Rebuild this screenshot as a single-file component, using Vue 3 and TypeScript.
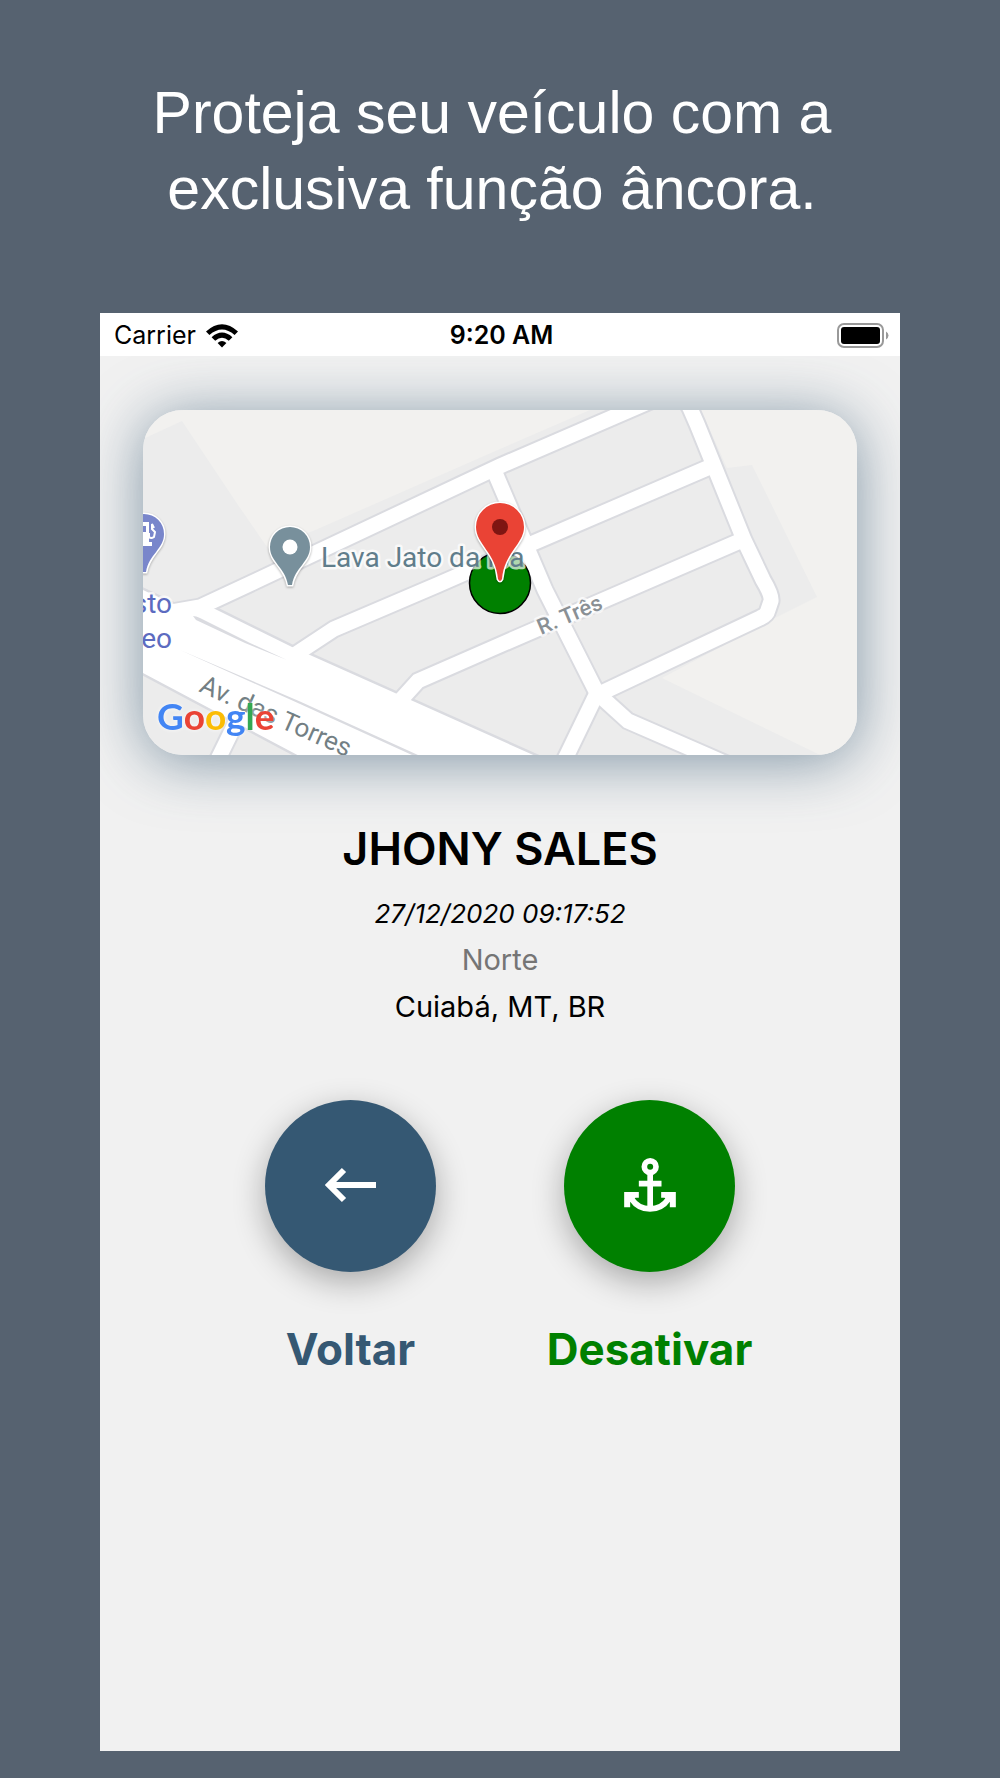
<script setup lang="ts">
interface Vehicle {
  name: string
  updatedAt: string
  heading: string
  place: string
}

const vehicle: Vehicle = {
  name: 'JHONY SALES',
  updatedAt: '27/12/2020 09:17:52',
  heading: 'Norte',
  place: 'Cuiabá, MT, BR',
}

const roads: string[] = [
  'M720 371 L500 466 L258 580 L200 607 L160 614',
  'M296 654 L334 629 L437 585 L533 543 L712 466',
  'M398 703 L418 681 L500 645 L740 541',
  'M493 468 L545 590 L597 693',
  'M682 394 L690 408 L697 424 L744 540 L763 580 Q772 595 771 601 L768 610 Q767 615 760 618 L597 695',
  'M597 693 L567 755 L557 775',
  'M597 693 L628 721 L706 755 L729 765',
  'M242 710 L220 755 L210 775',
]

const logo = [
  { ch: 'G', fill: '#4285f4' },
  { ch: 'o', fill: '#ea4335' },
  { ch: 'o', fill: '#fbbc05' },
  { ch: 'g', fill: '#4285f4' },
  { ch: 'l', fill: '#34a853' },
  { ch: 'e', fill: '#ea4335' },
]
</script>

<template>
  <main class="promo">
    <h1 class="headline">Proteja seu veículo com a<br />exclusiva função âncora.</h1>

    <section class="phone">
      <header class="status">
        <span class="carrier">
          Carrier
          <svg class="wifi" viewBox="0 0 32 24" aria-hidden="true">
            <path d="M0 7.5 Q16 -7 32 7.5 L28.6 11 Q16 0 3.400 11Z" />
            <path d="M5.600 13.200 Q16 4 26.400 13.200 L22.800 16.700 Q16 11 9.200 16.700Z" />
            <path d="M11.600 19 Q16 15 20.400 19 L16 23.500Z" />
          </svg>
        </span>
        <time class="clock">9:20 AM</time>
        <svg class="battery" viewBox="0 0 52 25" aria-hidden="true">
          <rect x="1" y="1" width="45" height="23" rx="6" fill="none" stroke="#999" stroke-width="2" />
          <rect x="4" y="4" width="39" height="17" rx="3" />
          <path d="M49 8.500 Q51.500 10 51.500 12.500 T49 16.500Z" fill="#999" />
        </svg>
      </header>

      <div class="map">
        <svg viewBox="143 410 714 345" preserveAspectRatio="xMidYMid slice" role="img" aria-label="Mapa">
          <rect x="143" y="410" width="714" height="345" fill="#ececec" />
          <path d="M143 410 V439 L182 421 L238 505 L267 547 L313 531 L500 449 L590 410Z" fill="#f2f1ef" />
          <path d="M701 410 L727 468 L752 465 L817 597 L777 617 L662 678 L820 755 H857 V410Z" fill="#f2f1ef" />

          <path class="avenue-edge" d="M130 584 L177 606 L215 609 L292 647 L395 693 L560 767 L320 767 L130 666Z" />
          <g class="road-edge"><path v-for="d in roads" :key="d" :d="d" /></g>
          <path class="avenue" d="M130 584 L177 606 L215 609 L292 647 L395 693 L560 767 L320 767 L130 666Z" />
          <g class="road"><path v-for="d in roads" :key="d" :d="d" /></g>
          <path d="M193 616 Q196 616 200 618 L250 643 L287 660 L245 643 L196 620Z" fill="#dadbe0" />
          <path d="M180 650 L300 701.500 L418 755 L412 755 L299 703.500Z" fill="#dadbe0" />

          <g class="place fuel">
            <path class="pin" fill="#7986cb" d="M144 514 a20 20 0 0 1 20 20 c0 15 -15 20 -18 38 h-4 c-3 -18 -18 -23 -18 -38 a20 20 0 0 1 20 -20Z" />
            <path d="M134 522 H149 V542 H152 V546 H131 V542 H134Z M137 526 V532 H146 V526Z" fill="#fff" fill-rule="evenodd" />
            <path d="M149 533 V537 Q151 539 154 537 L155 532 L152 529 V524 L154 528" fill="none" stroke="#fff" stroke-width="2" />
            <text x="172" y="613" text-anchor="end">sto</text>
            <text x="172" y="648" text-anchor="end">eo</text>
          </g>

          <text class="street" transform="translate(198 691) rotate(24)">Av. das Torres</text>
          <text class="street small" transform="translate(541 635) rotate(-23)">R. Três</text>

          <circle cx="500" cy="583" r="30.500" fill="#008000" stroke="#000" stroke-width="1.500" />
          <g class="place wash">
            <path class="pin" fill="#78909c" d="M290 527 a20 20 0 0 1 20 20 c0 15 -15 20 -18 38 h-4 c-3 -18 -18 -23 -18 -38 a20 20 0 0 1 20 -20Z" />
            <circle cx="290" cy="547" r="7.500" fill="#fff" />
            <text x="321" y="567">Lava Jato da Isa</text>
          </g>
          <path class="pin" fill="#ea4335" d="M500 503 a24 24 0 0 1 24 24 c0 17 -20 26 -22 52 q-2 4 -4 0 c-2 -26 -22 -35 -22 -52 a24 24 0 0 1 24 -24Z" />
          <circle cx="500" cy="527" r="8" fill="#7f1512" />

          <text class="google" x="157" y="730"><tspan v-for="(l, i) in logo" :key="i" :fill="l.fill">{{ l.ch }}</tspan></text>
        </svg>
      </div>

      <div class="info">
        <h2>{{ vehicle.name }}</h2>
        <time class="date">{{ vehicle.updatedAt }}</time>
        <p class="heading">{{ vehicle.heading }}</p>
        <p>{{ vehicle.place }}</p>
      </div>

      <nav class="actions">
        <button type="button" class="action back">
          <span class="disc">
            <svg viewBox="0 0 52 54" aria-hidden="true">
              <path d="M51 26 H5 M19 11 L4 26 L19 41" fill="none" stroke="#fff" stroke-width="6" />
            </svg>
          </span>
          Voltar
        </button>
        <button type="button" class="action anchor">
          <span class="disc">
            <svg viewBox="0 0 155 168" aria-hidden="true">
              <g fill="none" stroke="#fff" stroke-width="17">
                <circle cx="78" cy="26" r="17.500" />
                <path d="M78 44 V158 M44 77 H112 M23 124 A66 66 0 0 0 132 124" />
              </g>
              <path d="M0 102 H44 V119 H34 L18 133 V148 H0Z M155 102 H111 V119 H121 L137 133 V148 H155Z" fill="#fff" />
            </svg>
          </span>
          Desativar
        </button>
      </nav>
    </section>
  </main>
</template>

<style>
body {
  margin: 0;
}
</style>

<style scoped>
.promo {
  box-sizing: border-box;
  min-height: 100vh;
  display: flex;
  flex-direction: column;
  padding: 75px 10% 27px;
  background: #566270;
  font-family: Inter, "Liberation Sans", sans-serif;
}

.headline {
  margin: 0 16px 86px 0;
  color: #fff;
  font: 400 59px/76px "Liberation Sans", Arial, sans-serif;
  text-align: center;
}

.phone {
  flex: 1;
  display: flex;
  flex-direction: column;
  background: #f1f1f1;
  overflow: hidden;
}

.status {
  box-sizing: border-box;
  display: grid;
  grid-template-columns: 1fr auto 1fr;
  align-items: center;
  height: 43px;
  padding: 2px 11px 0 14px;
  background: #fff;
  color: #000;
  font-size: 25px;
  line-height: 41px;
  position: relative;
}

.carrier {
  display: flex;
  align-items: center;
  gap: 10px;
}

.wifi {
  width: 32px;
  height: 24px;
}

.clock {
  font-weight: 600;
}

.battery {
  width: 52px;
  height: 25px;
  justify-self: end;
}

.map {
  margin: 54px 43px 0;
  aspect-ratio: 714 / 345;
  border-radius: 40px;
  box-shadow: 0 6px 60px rgba(54, 88, 115, 0.6);
}

.map svg {
  display: block;
  width: 100%;
  height: 100%;
  border-radius: 40px;
}

.avenue-edge,
.road-edge {
  fill: none;
  stroke: #dadbe0;
  stroke-width: 5px;
}

.road-edge {
  stroke-width: 19px;
}

.avenue {
  fill: #fff;
}

.road {
  fill: none;
  stroke: #fff;
  stroke-width: 15px;
}

.pin {
  stroke: #fff;
  stroke-width: 3px;
  paint-order: stroke;
  filter: drop-shadow(0 1px 1px rgba(0, 0, 0, 0.3));
}

.map text {
  font-family: Roboto, sans-serif;
  font-size: 28px;
  stroke: rgba(255, 255, 255, 0.7);
  stroke-width: 5px;
  stroke-linejoin: round;
  paint-order: stroke;
}

.fuel text {
  fill: #5c6bc0;
}

.wash text {
  fill: #607d8b;
}

.map .street {
  font-size: 26px;
  fill: #737f84;
}

.map .small {
  font-size: 22px;
  font-weight: 500;
  fill: #8a9095;
}

.map .google {
  font-family: Lato, sans-serif;
  font-size: 37px;
  font-weight: 700;
  stroke: none;
  filter: drop-shadow(0 0 2px rgba(255, 255, 255, 0.8));
}

.info {
  display: flex;
  flex-direction: column;
  align-items: center;
  margin-top: 64px;
  color: #000;
  font-size: 29px;
  line-height: 47px;
}

.info h2 {
  margin: 0;
  font-size: 45px;
  font-weight: 600;
  line-height: 60px;
}

.info p {
  margin: 0;
}

.date {
  margin-top: 12px;
  font-size: 26px;
  font-style: italic;
  line-height: 45px;
}

.info .heading {
  color: #757575;
}

.actions {
  display: flex;
  justify-content: center;
  gap: 59px;
  margin-top: 70px;
}

.action {
  width: 240px;
  display: flex;
  flex-direction: column;
  align-items: center;
  gap: 47px;
  padding: 0;
  border: 0;
  background: none;
  color: #355873;
  font: 700 44px/60px Inter, "Liberation Sans", sans-serif;
  cursor: pointer;
}

.disc {
  width: 171px;
  height: 172px;
  display: grid;
  place-items: center;
  border-radius: 50%;
  background: #355873;
  box-shadow: 0 10px 32px rgba(0, 0, 0, 0.3);
}

.disc svg {
  width: 52px;
  height: 56px;
}

.anchor {
  color: #008000;
}

.anchor .disc {
  background: #008000;
}
</style>
